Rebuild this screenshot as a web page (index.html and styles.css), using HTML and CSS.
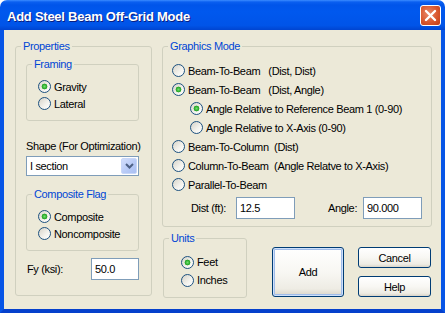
FILE: index.html
```html
<!DOCTYPE html>
<html lang="en">
<head>
<meta charset="UTF-8" />
<title>Add Steel Beam Off-Grid Mode</title>
<link rel="stylesheet" href="styles.css">
</head>
<body>
  <div class="window">
    <div class="titlebar">
      <span class="title">Add Steel Beam Off-Grid Mode</span>
      <button class="close" aria-label="Close">
        <svg width="19" height="19" viewBox="0 0 19 19"><path d="M5 5 L14 14 M14 5 L5 14" stroke="#fff" stroke-width="2.4" stroke-linecap="round" fill="none"/></svg>
      </button>
    </div>
    <div class="frame">
      <div class="client">
        <!-- Columna izquierda -->
        <fieldset class="group props">
          <legend>Properties</legend>
          <div class="props-body">
            <fieldset class="group">
              <legend>Framing</legend>
              <div class="radio-body">
                <label class="opt"><input type="radio" name="framing" checked>Gravity</label>
                <label class="opt"><input type="radio" name="framing">Lateral</label>
              </div>
            </fieldset>

            <div class="shape-label">Shape (For Optimization)</div>
            <div class="combo">
              <span class="combo-text">I section</span>
              <span class="combo-btn">
                <svg width="9" height="6" viewBox="0 0 9 6"><path d="M1 1 L4.5 4.5 L8 1" stroke="#4d6185" stroke-width="2" fill="none"/></svg>
              </span>
            </div>

            <fieldset class="group composite">
              <legend>Composite Flag</legend>
              <div class="radio-body">
                <label class="opt"><input type="radio" name="composite" checked>Composite</label>
                <label class="opt"><input type="radio" name="composite">Noncomposite</label>
              </div>
            </fieldset>

            <div class="fy-row">
              <span class="fy-label">Fy (ksi):</span>
              <input type="text" class="text fy-input" value="50.0">
            </div>
          </div>
        </fieldset>

        <!-- Columna derecha -->
        <div class="right-col">
          <fieldset class="group">
            <legend>Graphics Mode</legend>
            <div class="graphics-body">
              <label class="opt"><input type="radio" name="mode"><span class="pre">Beam-To-Beam   (Dist, Dist)</span></label>
              <label class="opt"><input type="radio" name="mode" checked><span class="pre">Beam-To-Beam   (Dist, Angle)</span></label>
              <div class="sub">
                <label class="opt"><input type="radio" name="angle" checked>Angle Relative to Reference Beam 1 (0-90)</label>
                <label class="opt"><input type="radio" name="angle">Angle Relative to X-Axis (0-90)</label>
              </div>
              <label class="opt"><input type="radio" name="mode"><span class="pre">Beam-To-Column  (Dist)</span></label>
              <label class="opt"><input type="radio" name="mode"><span class="pre">Column-To-Beam  (Angle Relatve to X-Axis)</span></label>
              <label class="opt"><input type="radio" name="mode">Parallel-To-Beam</label>
              <div class="dist-row">
                <span class="dist-label">Dist (ft):</span>
                <input type="text" class="text dist-input" value="12.5">
                <span class="angle-label">Angle:</span>
                <input type="text" class="text dist-input" value="90.000">
              </div>
            </div>
          </fieldset>

          <div class="bottom-row">
            <fieldset class="group units">
              <legend>Units</legend>
              <div class="units-body">
                <label class="opt"><input type="radio" name="units" checked>Feet</label>
                <label class="opt"><input type="radio" name="units">Inches</label>
              </div>
            </fieldset>
            <button class="btn btn-add">Add</button>
            <div class="btn-col">
              <button class="btn">Cancel</button>
              <button class="btn">Help</button>
            </div>
          </div>
        </div>
      </div>
    </div>
  </div>
</body>
</html>
```

FILE: styles.css
```css
* {
  box-sizing: border-box;
}
body {
  margin: 0;
  background: #fff;
  font-family: "Liberation Sans", Arial, sans-serif;
  font-size: 11px;
  letter-spacing: -0.35px;
  color: #000;
}
.window {
  width: 445px;
  height: 313px;
  display: flex;
  flex-direction: column;
  border-radius: 7px 7px 0 0;
  overflow: hidden;
}
.titlebar {
  height: 30px;
  flex: none;
  display: flex;
  align-items: center;
  justify-content: space-between;
  padding: 2px 4px 0 7px;
  background: linear-gradient(to bottom, #3b8cff 0, #0a5ff0 2px, #0055ea 5px, #0058ee 40%, #0054e8 85%, #0044d0 100%);
}
.title {
  color: #fff;
  font-weight: bold;
  font-size: 13px;
  letter-spacing: -0.25px;
  text-shadow: 1px 1px 0 #0a1e80;
}
.close {
  width: 21px;
  height: 21px;
  padding: 0;
  margin-top: -1px;
  border: 1px solid #fff;
  border-radius: 3px;
  background: radial-gradient(circle at 40% 40%, #e98a6c 0, #d9582f 55%, #c13c14 100%);
  display: flex;
  align-items: center;
  justify-content: center;
}
.frame {
  flex: 1;
  display: flex;
  border: 4px solid #0755e6;
  border-top: 0;
  border-bottom-color: #0540cc;
}
.client {
  flex: 1;
  display: flex;
  align-items: flex-start;
  gap: 10px;
  padding: 10px 9px 0 11px;
  background: #ece9d8;
}
.group {
  margin: 0;
  padding: 0;
  min-width: 0;
  border: 1px solid #d0d0bf;
  border-radius: 3px;
}
.group legend {
  margin-left: 5px;
  padding: 0 2px;
  line-height: 13px;
  color: #0046d5;
}
.props {
  width: 137px;
}
.props-body {
  padding: 5px 12px 15px 10px;
}
.radio-body {
  padding: 7px 0 8px 11px;
}
.radio-body .opt {
  height: 17px;
}
.opt {
  display: flex;
  align-items: center;
  height: 19px;
  white-space: nowrap;
}
.pre {
  white-space: pre;
}
.opt input {
  appearance: none;
  -webkit-appearance: none;
  width: 13px;
  height: 13px;
  margin: 0 3px 0 0;
  flex: none;
  border: 1px solid #1c5180;
  border-radius: 50%;
  background: linear-gradient(135deg, #d6d3c8 0%, #f4f3ee 60%, #fff 100%);
}
.opt input:checked {
  background: radial-gradient(circle, #6fe06f 0, #21a121 2.6px, transparent 3.2px), linear-gradient(135deg, #d6d3c8 0%, #f4f3ee 60%, #fff 100%);
}
.shape-label {
  margin-top: 19px;
  line-height: 13px;
  white-space: nowrap;
}
.combo {
  margin-top: 3px;
  height: 20px;
  display: flex;
  align-items: center;
  padding: 1px;
  border: 1px solid #7f9db9;
  background: #fff;
}
.combo-text {
  flex: 1;
  padding-left: 2px;
}
.combo-btn {
  width: 16px;
  height: 16px;
  display: flex;
  align-items: center;
  justify-content: center;
  border: 1px solid #c8d7f8;
  border-radius: 2px;
  background: linear-gradient(135deg, #d2defc 0%, #b6c9f6 60%, #a9bff2 100%);
}
.composite {
  margin-top: 12px;
}
.fy-row {
  margin-top: 7px;
  display: flex;
  align-items: center;
  padding-left: 1px;
}
.fy-label {
  flex: 1;
}
.text {
  height: 22px;
  padding: 0 3px;
  border: 1px solid #7f9db9;
  background: #fff;
  font: inherit;
  letter-spacing: inherit;
  color: #000;
  outline: none;
}
.fy-input {
  width: 48px;
}
.right-col {
  width: 270px;
}
.graphics-body {
  padding: 8px 0 7px 9px;
}
.sub {
  padding-left: 18px;
}
.dist-row {
  margin-top: 3px;
  display: flex;
  align-items: center;
  padding-left: 19px;
}
.dist-label {
  width: 45px;
}
.dist-input {
  width: 59px;
}
.angle-label {
  width: 35px;
  margin-left: 33px;
}
.bottom-row {
  margin-top: 5px;
  display: flex;
  align-items: flex-start;
}
.units {
  width: 84px;
  margin-left: 1px;
}
.units-body {
  padding: 8px 0 8px 17px;
}
.units-body .opt {
  height: 18px;
}
.btn {
  font: inherit;
  letter-spacing: inherit;
  color: #000;
  padding: 0;
  border: 1px solid #003c74;
  border-radius: 3px;
  background: linear-gradient(to bottom, #fff 0%, #f8f7f3 50%, #eeece4 85%, #d9d4c8 100%);
}
.btn-add {
  width: 72px;
  height: 50px;
  margin: 15px 0 0 25px;
  box-shadow: inset 0 0 0 1px #cee0fb, inset 0 0 0 2px #a0bce9;
}
.btn-col {
  margin: 15px 0 0 14px;
  display: flex;
  flex-direction: column;
  gap: 8px;
}
.btn-col .btn {
  width: 73px;
  height: 21px;
}
```
